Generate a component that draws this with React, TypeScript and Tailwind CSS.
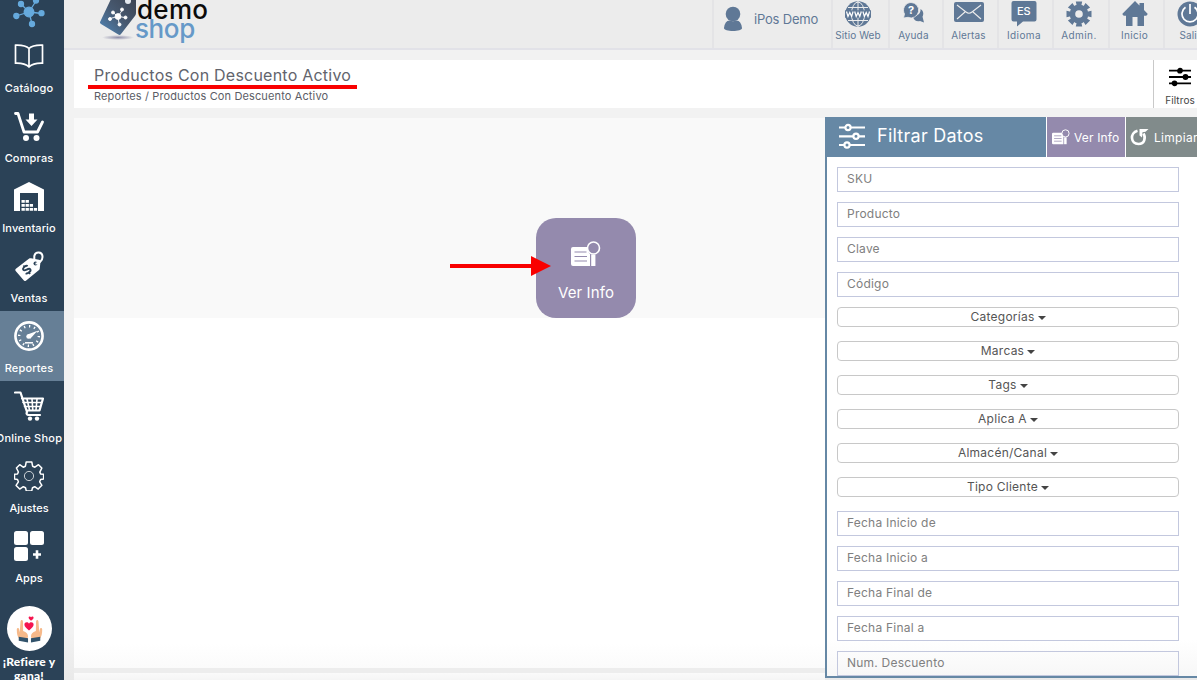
import React from "react";

const font = "font-['Inter','Noto_Sans',sans-serif]";

function Molecule({ className, color }: { className: string; color: string }) {
  return (
    <svg viewBox="0 0 32 32" className={className} stroke={color} fill={color} strokeWidth="1.3">
      <path d="M16 16 8 8M16 16l7-11M16 16l13 1.500M16 16 3 20M16 16l3 12" fill="none" />
      <circle cx="16" cy="16" r="4.800" />
      <circle cx="8" cy="8" r="2.500" />
      <circle cx="23" cy="4.500" r="2.500" />
      <circle cx="28.500" cy="17.200" r="2.500" />
      <circle cx="3.300" cy="20" r="2.500" />
      <circle cx="19" cy="28" r="2.500" />
    </svg>
  );
}

const svg = "h-[30px] w-[30px] shrink-0";

const BookIcon = () => (
  <svg viewBox="0 0 30 30" className={svg} fill="none" stroke="#fff" strokeWidth="1.700">
    <path d="M15 7.500C12 4.500 7 4 1.500 4.200v18C7 22 12 23 15 26c3-3 8-4 13.500-3.800v-18C23 4 18 4.500 15 7.500zM15 7.500V26" />
  </svg>
);
const BuyIcon = () => (
  <svg viewBox="0 0 30 30" className={svg} fill="none" stroke="#fff" strokeWidth="2.800" strokeLinecap="round" strokeLinejoin="round">
    <path d="M1.500 2.500H4l6 18.500h13.500l5-10" />
    <circle cx="12" cy="27" r="3" fill="#fff" stroke="none" />
    <circle cx="22.500" cy="27" r="3" fill="#fff" stroke="none" />
    <path d="M15 2.500h5v6h3.500l-6 6.500-6-6.500H15z" fill="#fff" stroke="none" />
  </svg>
);
const WarehouseIcon = () => (
  <svg viewBox="0 0 30 30" className={svg} fill="#fff">
    <path d="M0 8.500 15 1l15 7.500V32h-6V12H6v20H0z" />
    <path d="M7.500 19h3.300v2.800H7.500zM11.600 19h3.300v2.800h-3.300zM7.500 23h3.300v2.800H7.500zM11.600 23h3.300v2.800h-3.300zM15.700 23H19v2.800h-3.300zM7.500 27h3.300v2.800H7.500zM11.600 27h3.300v2.800h-3.300zM15.700 27H19v2.800h-3.300zM19.800 27h3.300v2.800h-3.300z" />
  </svg>
);
const TagIcon = () => (
  <svg viewBox="0 0 30 30" className={svg}>
    <path d="M17 7.200 25 8.700c1 .2 1.600 1 1.500 2l-.8 7c0 .6-.3 1-.7 1.400L12.200 29.600c-.8.7-1.700.6-2.300-.1L1.700 20c-.6-.8-.5-1.600.2-2.300L15.200 7.600c.5-.4 1-.5 1.800-.4z" fill="#fff" />
    <circle cx="21.500" cy="12.500" r="2" fill="#2b4257" />
    <path d="M21.500 12.500c3 .4 7.300-2.500 7-7C28.200.5 21.500.2 20.300 5v3" stroke="#fff" strokeWidth="2" fill="none" />
    <g transform="translate(12.700 18.600) rotate(-38)" stroke="#2b4257" fill="none">
      <path d="M3-2.200C2.300-4-2.800-4.200-2.800-1.700-2.800.5 3-.6 3 1.900 3 4.200-2.400 4.200-3 2.200" strokeWidth="1.900" />
      <path d="M0-5.300v2M0 3.500v2" strokeWidth="1.700" />
    </g>
  </svg>
);
const GaugeIcon = () => (
  <svg viewBox="0 0 30 30" className={svg} fill="none" stroke="#fff">
    <circle cx="15" cy="15" r="13.600" strokeWidth="2.600" />
    <circle cx="15" cy="15" r="9.800" strokeWidth="2.400" strokeDasharray="1.300 3.800" pathLength="61.200" />
    <path d="m13.500 13.500 10-3.800L16 18z" fill="#fff" stroke="none" />
    <circle cx="14.500" cy="15.500" r="2.200" fill="#fff" stroke="none" />
    <path d="M11 21.800h8" strokeWidth="1.500" />
  </svg>
);
const CartIcon = () => (
  <svg viewBox="0 0 30 30" className={svg} fill="none" stroke="#fff" strokeWidth="1.700" strokeLinecap="round" strokeLinejoin="round">
    <path d="M1 1.500h5.500l6.500 19.500M8 7.500h21L25.500 19.500H13M13 21c-1 1.500 0 3 1.500 3H26" strokeWidth="2.200" />
    <path d="M9 11.500h18M10.500 15.500H26M13 8l2.500 11M18 8l.8 11M23 8l-1 11" strokeWidth="1.600" />
    <circle cx="16" cy="27.600" r="2.200" fill="#fff" stroke="none" />
    <circle cx="23" cy="27.600" r="2.200" fill="#fff" stroke="none" />
  </svg>
);
const GearIcon = () => (
  <svg viewBox="0 0 30 30" className={svg} fill="none" stroke="#fff" strokeWidth="1.500" strokeLinejoin="round">
    <path d="M12.200 1h5.600l.8 4.200 2.300 1L24.500 3.700l3.300 3.400-2 4 .8 1.800 3 .4v4.600l-3 .6-.9 2.300 2.200 3.500-3.700 3.800-3.500-2.400-2.200 1-.8 3.200h-5.400l-.8-3.200-2.200-1-3.600 2.400-3.600-3.700 2.300-3.600-.9-2.300-3-.6v-4.600l3-.4.9-1.900-2-4 3.300-3.300L9.200 6.200l2.200-1z" />
    <circle cx="15" cy="15" r="4.600" strokeWidth="1" opacity=".75" />
  </svg>
);
const AppsIcon = () => (
  <svg viewBox="0 0 30 30" className={svg} fill="#fff">
    <rect width="14" height="14" rx="2.500" />
    <rect x="16" width="14" height="14" rx="2.500" />
    <rect y="16" width="14" height="14" rx="2.500" />
    <path d="M21.700 19.300h2.600v2.900H27v2.600h-2.700v2.900h-2.600v-2.900H19v-2.600h2.700z" />
  </svg>
);

function HandsIcon() {
  return (
    <svg viewBox="0 0 46 46" className="h-[45px] w-[45px] shrink-0">
      <circle cx="23" cy="23" r="23" fill="#fff" />
      <path d="M12.500 33.500c-1.800-2.500-2.500-5-2.500-9.500 0-2 2-2.200 2.400-.3L13 27l.8-11c.2-2.300 2.400-2.300 2.500 0l.2 9.500c3.500 1 5 3 5 6l-1.500 4z" fill="#f6b98a" />
      <path d="M33.500 33.500c1.800-2.500 2.500-5 2.500-9.500 0-2-2-2.200-2.400-.3L33 27l-.8-11c-.2-2.300-2.400-2.300-2.500 0l-.2 9.500c-3.500 1-5 3-5 6l1.500 4z" fill="#f6b98a" />
      <path d="m12 31.500 9.500 1.500v4.300L12 35.500zM34 31.500 24.500 33v4.300l9.500-1.800z" fill="#32536b" />
      <path d="M22.500 25c-3-2.500-4.700-4-4.700-6 0-2.500 3.500-3.300 4.700-.8 1.200-2.500 4.700-1.700 4.700.8 0 2-1.700 3.500-4.700 6zM24.500 15c-1.500-1.200-2.500-2-2.400-3.200.1-1.300 2-1.500 2.500-.2.500-1.300 2.600-1 2.600.4 0 1-1.200 2-2.700 3z" fill="#f5144f" />
    </svg>
  );
}

const menu = [
  { label: "Catálogo", icon: <BookIcon />, cls: "tracking-[0.15px]" },
  { label: "Compras", icon: <BuyIcon />, cls: "tracking-[0.15px]" },
  { label: "Inventario", icon: <WarehouseIcon />, cls: "tracking-[0.1px]" },
  { label: "Ventas", icon: <TagIcon />, cls: "tracking-[0.1px]" },
  { label: "Reportes", icon: <GaugeIcon />, cls: "tracking-[0.15px]", active: true },
  { label: "Online Shop", icon: <CartIcon />, cls: "tracking-[0.25px]" },
  { label: "Ajustes", icon: <GearIcon />, cls: "tracking-[0px]" },
  { label: "Apps", icon: <AppsIcon />, cls: "tracking-[0.1px]" },
];

function Sidebar() {
  return (
    <aside className="flex h-full w-16 shrink-0 flex-col overflow-hidden bg-[#2b4257] text-white">
      <div className="h-[31px] shrink-0 overflow-hidden">
        <Molecule className="-mt-1 ml-[13px] h-8 w-8" color="#66aadd" />
      </div>
      {menu.map((m) => (
        <div key={m.label} className={`flex h-[70px] w-16 shrink-0 flex-col items-center pt-[10px] pr-[6px] ${m.active ? "bg-[#667f96]" : ""}`}>
          {m.icon}
          <span className={`mt-[9px] text-[11px] leading-4 font-medium whitespace-nowrap ${m.cls}`}>{m.label}</span>
        </div>
      ))}
      <div className="flex shrink-0 flex-col items-center pt-[15px] pr-[6px]">
        <HandsIcon />
        <span className="mt-[4px] text-center font-['Lato',sans-serif] text-xs leading-[14px] font-black tracking-[0.2px] whitespace-nowrap">
          ¡Refiere y<br />gana!
        </span>
      </div>
    </aside>
  );
}

function Brand() {
  return (
    <div className="ml-[34px] flex w-[130px] shrink-0">
      <svg viewBox="0 0 42 46" className="-mt-1 h-[46px] w-[42px] shrink-0">
        <defs>
          <linearGradient id="tag" x1="1" y1="0" x2="0" y2="1">
            <stop offset="0" stopColor="#3b4250" />
            <stop offset=".5" stopColor="#475970" />
            <stop offset="1" stopColor="#5189bd" />
          </linearGradient>
          <radialGradient id="shade">
            <stop offset="0" stopColor="#8f8faa" />
            <stop offset="1" stopColor="#ececec" />
          </radialGradient>
        </defs>
        <ellipse cx="20" cy="41.500" rx="16" ry="2.500" fill="url(#shade)" />
        <path d="M12.500 4 15 0h21c1 0 2 1 2 2v15c0 1-.3 2-.9 2.800L23 38c-.8 1-1.600 1.200-2.700.6L3 28c-1-.7-1.300-1.600-.7-2.600z" fill="url(#tag)" />
        <circle cx="30" cy="5" r="3" fill="#e4e9ef" />
        <g stroke="#fff" fill="#fff" strokeWidth=".9">
          <path d="m20 20.500-5-4M20 20.500l4-6M20 20.500l7 1M20 20.500l-8 2M20 20.500l1 7" />
          <circle cx="20" cy="20.500" r="2.900" /><circle cx="15" cy="16.500" r="1.500" /><circle cx="24" cy="13.500" r="1.500" />
          <circle cx="27.500" cy="21.500" r="1.500" /><circle cx="12" cy="23" r="1.500" /><circle cx="21.500" cy="28.500" r="1.500" />
        </g>
      </svg>
      <div className="-ml-[5px] text-[26px] leading-[19px] font-medium">
        <div className="ml-[2px] tracking-[0.3px] text-[#0b0b0b]">demo</div>
        <div className="tracking-[-0.4px] text-[#6699c8]">shop</div>
      </div>
    </div>
  );
}

const blue = "#5f7896";
const WebIcon = () => (
  <svg viewBox="0 0 26 26" className="h-[26px] w-[26px]">
    <circle cx="13" cy="13" r="12.800" fill={blue} />
    <g fill="none" stroke="#ececec" strokeWidth="1"><ellipse cx="13" cy="13" rx="6.500" ry="12" /><path d="M13 0v26M3 6.500h20M3 19.500h20" /></g>
    <rect y="9.300" width="26" height="7.400" fill={blue} />
    <path d="m1.500 10.500 1.500 5 1.800-4 1.800 4 1.500-5M9.700 10.500l1.500 5 1.800-4 1.800 4 1.500-5M17.900 10.500l1.500 5 1.800-4 1.800 4 1.500-5" fill="none" stroke="#fff" strokeWidth="1.200" />
  </svg>
);
const HelpIcon = () => (
  <svg viewBox="0 0 22 22" className="mt-[1px] h-[22px] w-[22px]">
    <path d="M11 14c4 0 7-3 6.500-7 3 1.500 3.500 5 2 7.800l1.500 5.700-4-1.500c-3 1-6-.5-7-4z" fill={blue} />
    <path d="M8 .500a7.700 7.700 0 1 1-3 14.800L.5 16l1-4A7.700 7.700 0 0 1 8 .500z" fill={blue} stroke="#ececec" strokeWidth=".8" />
    <text x="8" y="12.300" textAnchor="middle" fontSize="11" fontWeight="700" fill="#fff">?</text>
  </svg>
);
const MailIcon = () => (
  <svg viewBox="0 0 30 20" className="mt-[1px] h-5 w-[30px]">
    <rect width="30" height="20" rx="2" fill={blue} />
    <path d="m3 3 9 7q3 2.400 6 0l9-7M3 17l8-7M27 17l-8-7" stroke="#ececec" strokeWidth="1.100" fill="none" />
  </svg>
);
const LangIcon = () => (
  <svg viewBox="0 0 26 26" className="h-[26px] w-[26px]">
    <path d="M2.500 0h21q2 0 2 2v16.500q0 2-2 2H12L6 25.500v-5H2.500q-2 0-2-2V2q0-2 2-2z" fill={blue} />
    <text x="12.800" y="14.300" textAnchor="middle" fontSize="11" fontWeight="500" fill="#fff">ES</text>
  </svg>
);
const AdminIcon = () => (
  <svg viewBox="0 0 26 26" className="h-[26px] w-[26px]">
    <g fill={blue}>
      <path d="M9.800.500h6.400L15 6h-4zM9.800 25.500h6.400L15 20h-4zM.500 9.800v6.400L6 15v-4zM25.500 9.800v6.400L20 15v-4z" />
      <path d="M9.800.500h6.400L15 6h-4zM9.800 25.500h6.400L15 20h-4zM.500 9.800v6.400L6 15v-4zM25.500 9.800v6.400L20 15v-4z" transform="rotate(45 13 13)" />
    </g>
    <circle cx="13" cy="13" r="6.600" fill="none" stroke={blue} strokeWidth="5.600" />
  </svg>
);
const HomeIcon = () => (
  <svg viewBox="0 0 26 26" className="h-[26px] w-[26px]" fill={blue}>
    <path d="M13 0 17.500 4.500V2h4.500v7l3.800 4-1.500 1.800H22V25h-6.500v-9h-5v9H4V14.800H1.700L.2 13z" />
  </svg>
);
const PowerIcon = () => (
  <svg viewBox="0 0 26 26" className="h-[26px] w-[26px]">
    <circle cx="13" cy="13" r="12.500" fill={blue} />
    <path d="M8.500 6.300a8 8 0 1 0 9 0M13 3v10" stroke="#fff" strokeWidth="1.700" fill="none" />
  </svg>
);

const tools = [
  { label: "Sitio Web", icon: <WebIcon />, w: "w-[57px] pr-[5px]", cls: "tracking-[0.1px]" },
  { label: "Ayuda", icon: <HelpIcon />, w: "w-[54px] pr-[5px]", cls: "tracking-[0.2px]" },
  { label: "Alertas", icon: <MailIcon />, w: "w-[55px] pr-[4px]", cls: "tracking-[0.15px]" },
  { label: "Idioma", icon: <LangIcon />, w: "w-[55px] pr-[3px]", cls: "tracking-[0.4px]" },
  { label: "Admin.", icon: <AdminIcon />, w: "w-[56px] pr-[4px]", cls: "tracking-[0.4px]" },
  { label: "Inicio", icon: <HomeIcon />, w: "w-[55px] pr-[4px]", cls: "tracking-[0.3px]" },
  { label: "Salir", icon: <PowerIcon />, w: "w-[55px] pr-[3px]", cls: "tracking-[0.1px]" },
];

function TopBar() {
  return (
    <header className="flex h-[50px] shrink-0 overflow-hidden border-b-2 border-[#e2e2e8] bg-[#ececec] text-[#5f7896]">
      <Brand />
      <div className="ml-[484px] flex h-12 w-[119px] shrink-0 border-l-2 border-[#e4e4e6]">
        <svg viewBox="0 0 20 26" className="mt-[6px] ml-[9px] h-[26px] w-5 shrink-0" fill={blue}>
          <circle cx="10" cy="8" r="7.300" />
          <path d="M1 22q1-8 6-7.500 3 1.500 6 0 5-.5 6 7.500c.5 4-18.500 4-18 0z" />
        </svg>
        <span className="mt-[9px] ml-[11px] text-[13px] leading-5 tracking-[-0.2px] whitespace-nowrap">iPos Demo</span>
      </div>
      {tools.map((t) => (
        <div key={t.label} className={`flex h-12 shrink-0 flex-col items-center border-l-2 border-[#e4e4e6] ${t.w}`}>
          <div className="flex h-[27px] pt-[1px]">{t.icon}</div>
          <span className={`mt-[1px] text-[10px] leading-[15px] whitespace-nowrap ${t.cls}`}>{t.label}</span>
        </div>
      ))}
    </header>
  );
}

function Sliders({ className, hollow }: { className: string; hollow?: string }) {
  return hollow ? (
    <svg viewBox="0 0 26 26" className={className} stroke="currentColor" fill={hollow} strokeWidth="2.200">
      <path d="M0 4.500h26M0 13.300h26M0 22h26" />
      <circle cx="9" cy="4.500" r="2.600" />
      <circle cx="17" cy="13.300" r="2.600" />
      <circle cx="8" cy="22" r="2.600" />
    </svg>
  ) : (
    <svg viewBox="0 0 22 22" className={className} stroke="currentColor" fill="currentColor" strokeWidth="1.800">
      <path d="M0 4.700h22M0 11h22M0 17.300h22" />
      <circle cx="11" cy="4.700" r="2" />
      <circle cx="16.500" cy="11" r="2" />
      <circle cx="5.500" cy="17.300" r="2" />
    </svg>
  );
}

function TitleBar() {
  return (
    <section className="mt-[10px] ml-[10px] flex h-12 shrink-0 bg-white">
      <div className="flex w-[1079px] shrink-0 flex-col items-start pl-[14px]">
        <h1 className="mt-[5px] ml-[6px] text-[16px] leading-5 tracking-[0.23px] whitespace-nowrap text-[#62646c]">Productos Con Descuento Activo</h1>
        <div className="h-1 w-[269px] bg-[#f90000]" />
        <p className="ml-[6px] text-[11px] leading-[15px] tracking-[0.13px] whitespace-nowrap text-[#5b5d66]">Reportes / Productos Con Descuento Activo</p>
      </div>
      <div className="flex w-[53px] shrink-0 flex-col items-center border-l border-[#c9c9c9] text-black">
        <Sliders className="mt-[6px] h-[22px] w-[22px]" />
        <span className="mt-[5px] text-[10px] leading-[15px] tracking-[0.1px] text-[#444]">Filtros</span>
      </div>
    </section>
  );
}

function ReportIcon({ className }: { className: string }) {
  return (
    <svg viewBox="0 0 30 26" className={className} fill="none" stroke="#fff">
      <path d="M2 6h14.500q0 5 2.500 7v12H2q-2 0-2-2V8q0-2 2-2z" fill="#fff" stroke="none" />
      <path d="M3.500 11h12M3.500 15.500h12.500M3.500 20h12.500" stroke="#948aad" strokeWidth="1.200" />
      <circle cx="22.500" cy="7" r="6" strokeWidth="1.600" />
      <path d="M22.300 13.500v11.500" strokeWidth="4.200" />
    </svg>
  );
}

const first = ["SKU", "Producto", "Clave", "Código"];
const selects = ["Categorías", "Marcas", "Tags", "Aplica A", "Almacén/Canal", "Tipo Cliente"];
const last = ["Fecha Inicio de", "Fecha Inicio a", "Fecha Final de", "Fecha Final a", "Num. Descuento"];

function Field({ label }: { label: string }) {
  return <div className="mb-[10px] h-[25px] shrink-0 border border-[#c3c8de] pl-[9px] text-xs leading-[22px] tracking-[0.22px] text-[#808080]">{label}</div>;
}

function FilterPanel() {
  return (
    <section className="-mt-[1px] flex h-[561px] w-[372px] shrink-0 flex-col overflow-hidden border-b-2 border-l-2 border-[#6688a5] bg-white">
      <div className="flex h-10 shrink-0 bg-[#6688a5] text-white">
        <div className="flex w-[219px] shrink-0">
          <Sliders className="mt-[6px] ml-3 h-[26px] w-[26px]" hollow="#6688a5" />
          <h2 className="mt-[7px] ml-3 text-[18px] leading-6 tracking-[0.25px] whitespace-nowrap">Filtrar Datos</h2>
        </div>
        <div className="flex w-[79px] shrink-0 items-center border-l border-white bg-[#948aad] pl-[5px]">
          <ReportIcon className="h-4 w-[18px] shrink-0" />
          <span className="mt-[2px] ml-1 text-xs tracking-[0.15px] whitespace-nowrap">Ver Info</span>
        </div>
        <div className="flex w-[72px] shrink-0 items-center overflow-hidden border-l border-white bg-[#818b8b] pl-[4px]">
          <svg viewBox="0 0 19 18" className="h-[18px] w-[19px] shrink-0" fill="none" stroke="#fff" strokeWidth="2.600">
            <path d="M7.500 2.800C-.5 5 .5 16 8.500 16c6 0 7.500-6 5-10.500" />
            <path d="M9.500 1h9l-3 2.800-3 .5-.5 5.200-2.500-2z" fill="#fff" stroke="none" />
          </svg>
          <span className="mt-[2px] ml-[5px] text-xs tracking-[0.3px] whitespace-nowrap">Limpiar</span>
        </div>
      </div>
      <div className="flex flex-1 flex-col overflow-hidden bg-linear-to-b from-white from-93% to-[#f7f7f7] pt-[10px] pr-[18px] pl-[10px]">
        {first.map((f) => <Field key={f} label={f} />)}
        {selects.map((s) => (
          <div key={s} className="mb-[14px] flex h-5 shrink-0 items-center justify-center gap-[3px] rounded-[4px] border border-[#c8c8c8] text-xs tracking-[0.25px] text-[#555]">
            <span className="leading-[18px]">{s}</span>
            <svg viewBox="0 0 8 4" className="mt-[2px] h-1 w-2" fill="#444"><path d="M0 0h8L4 4z" /></svg>
          </div>
        ))}
        {last.map((f) => <Field key={f} label={f} />)}
      </div>
    </section>
  );
}

export default function App() {
  return (
    <div className={`flex h-[680px] w-[1197px] overflow-hidden bg-[#f2f2f2] ${font}`}>
      <Sidebar />
      <main className="flex w-[1133px] shrink-0 flex-col bg-linear-to-b from-[#f2f2f2] from-93% to-[#e9e9e9]">
        <TopBar />
        <TitleBar />
        <div className="mt-[10px] ml-[10px] flex h-[562px] shrink-0">
          <div className="flex w-[751px] shrink-0 flex-col">
            <div className="relative h-[200px] shrink-0 bg-[#f9f9f9]">
              <button className="mt-[100px] ml-[462px] flex h-[100px] w-[100px] flex-col items-center rounded-[20px] bg-[#948aad] text-white">
                <ReportIcon className="mt-[23px] h-[26px] w-[30px]" />
                <span className="mt-4 text-[15px] leading-5 tracking-[0.1px] whitespace-nowrap">Ver Info</span>
              </button>
              <svg viewBox="0 0 102 20" className="absolute top-[138px] left-[376px] h-5 w-[102px]" fill="#f90000">
                <path d="M0 8h81V0l20 10-20 10v-8H0z" />
              </svg>
            </div>
            <div className="h-[350px] shrink-0 bg-linear-to-b from-white from-93% to-[#fbfbfb]" />
            <div className="h-[5px] shrink-0 bg-[#ededed]" />
            <div className="h-[7px] shrink-0 bg-linear-to-b from-[#fafafa] to-[#f5f5f5]" />
          </div>
          <FilterPanel />
        </div>
      </main>
    </div>
  );
}
